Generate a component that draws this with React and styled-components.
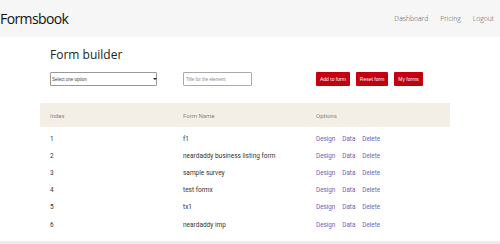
import React from 'react'
import styled, { createGlobalStyle } from 'styled-components'

const GlobalStyle = createGlobalStyle`
  body {
    margin: 0;
    background: #fff;
    font-family: "Open Sans", "Liberation Sans", sans-serif;
  }
`

const Page = styled.div`
  width: 500px;
  height: 244px;
  overflow: hidden;
  display: flex;
  flex-direction: column;
`

const Header = styled.header`
  height: 37px;
  background: #f6f6f6;
  display: flex;
  align-items: center;
  justify-content: space-between;
  padding: 0 6px 0 0;
  flex-shrink: 0;
`

const Brand = styled.div`
  font-family: "Open Sans", sans-serif;
  font-size: 14px;
  letter-spacing: -0.6px;
  color: #111;
  margin-top: -1px;
`

const Nav = styled.nav`
  display: flex;
  gap: 12px;
`

const NavLink = styled.a`
  font-size: 6.8px;
  font-weight: 300;
  color: #555;
  text-decoration: none;
`

const Main = styled.main`
  flex: 1;
  padding: 10px 50px 0 40px;
`

const Title = styled.h1`
  margin: 0 0 9px 10px;
  font-size: 12px;
  font-weight: 400;
  color: #222;
  line-height: 16px;
`

const Grid = styled.div`
  display: grid;
  grid-template-columns: 133px 133px 1fr;
`

const Toolbar = styled(Grid)`
  height: 14px;
  margin-bottom: 17px;
  align-items: center;
  & > * {
    padding-left: 10px;
    display: flex;
  }
`

const SelectWrap = styled.div`
  position: relative;
  &::after {
    content: '';
    position: absolute;
    left: 113px;
    top: 6px;
    border-left: 2px solid transparent;
    border-right: 2px solid transparent;
    border-top: 2.5px solid #222;
    pointer-events: none;
  }
`

const Select = styled.select`
  appearance: none;
  width: 107px;
  height: 14px;
  font-size: 4.5px;
  font-family: "Liberation Sans", sans-serif;
  border: 1px solid #999;
  border-radius: 1px;
  padding: 0 1px;
  background: #fff;
  color: #444;
  box-sizing: border-box;
  outline: none;
`

const Input = styled.input`
  width: 69px;
  height: 14px;
  font-size: 4.5px;
  font-family: "Liberation Sans", sans-serif;
  border: 1px solid #aaa;
  border-radius: 1px;
  padding: 0 2px;
  box-sizing: border-box;
  &::placeholder {
    color: #888;
  }
`

const Buttons = styled.div`
  display: flex;
  gap: 6px;
`

const Button = styled.button`
  height: 14px;
  padding: 0 4px;
  border: none;
  border-radius: 1px;
  background: #c20010;
  color: #fff;
  font-family: "Liberation Sans", sans-serif;
  font-size: 5px;
  cursor: pointer;
`

const HeadRow = styled(Grid)`
  background: #f3eee6;
  height: 24px;
  align-items: center;
  font-family: Roboto, sans-serif;
  font-size: 6px;
  color: #888;
  & > div {
    padding-left: 10px;
  }
`

const Body = styled.div`
  margin-top: 3px;
`

const Row = styled(Grid)`
  height: 17.2px;
  align-items: center;
  font-family: Roboto, sans-serif;
  font-size: 6.5px;
  & > div {
    padding-left: 10px;
  }
`

const Cell = styled.div`
  color: #333;
`

const Options = styled.div`
  display: flex;
  gap: 7px;
`

const Action = styled.a`
  color: #6666bb;
  text-decoration: none;
  font-size: 6.3px;
`

const Footer = styled.div`
  height: 3px;
  background: #ececec;
  flex-shrink: 0;
`

const forms = [
  'f1',
  'neardaddy business listing form',
  'sample survey',
  'test formx',
  'tx1',
  'neardaddy imp',
]

export default function App() {
  return (
    <>
      <GlobalStyle />
      <Page>
        <Header>
          <Brand>Formsbook</Brand>
          <Nav>
            <NavLink>Dashboard</NavLink>
            <NavLink>Pricing</NavLink>
            <NavLink>Logout</NavLink>
          </Nav>
        </Header>
        <Main>
          <Title>Form builder</Title>
          <Toolbar>
            <SelectWrap>
              <Select defaultValue="">
                <option value="">Select one option</option>
              </Select>
            </SelectWrap>
            <div>
              <Input placeholder="Title for the element" />
            </div>
            <Buttons>
              <Button>Add to form</Button>
              <Button>Reset form</Button>
              <Button>My forms</Button>
            </Buttons>
          </Toolbar>
          <HeadRow>
            <div>Index</div>
            <div>Form Name</div>
            <div>Options</div>
          </HeadRow>
          <Body>
            {forms.map((name, i) => (
              <Row key={i}>
                <Cell>{i + 1}</Cell>
                <Cell>{name}</Cell>
                <Options>
                  <Action>Design</Action>
                  <Action>Data</Action>
                  <Action>Delete</Action>
                </Options>
              </Row>
            ))}
          </Body>
        </Main>
        <Footer />
      </Page>
    </>
  )
}
